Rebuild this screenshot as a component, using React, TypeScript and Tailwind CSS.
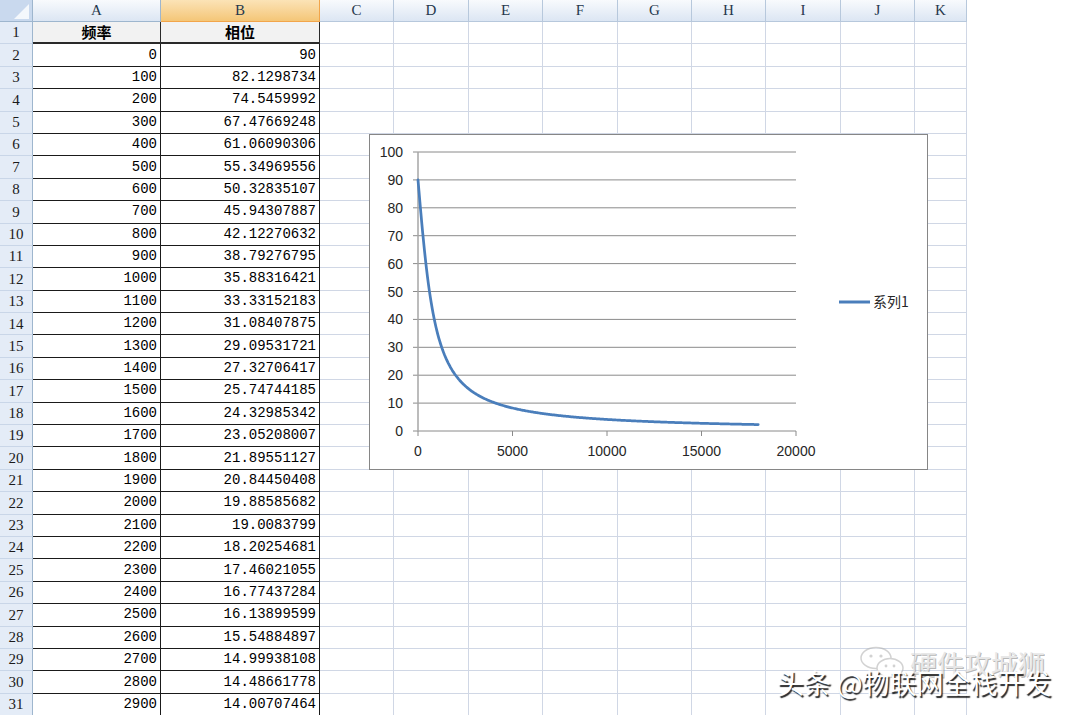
const COLS = [
  { key: "C", w: "w-[74px]" },
  { key: "D", w: "w-[75px]" },
  { key: "E", w: "w-[74px]" },
  { key: "F", w: "w-[75px]" },
  { key: "G", w: "w-[74px]" },
  { key: "H", w: "w-[74px]" },
  { key: "I", w: "w-[75px]" },
  { key: "J", w: "w-[74px]" },
  { key: "K", w: "w-[52px]" },
];

const PHASE = [
  "90", "82.1298734", "74.5459992", "67.47669248", "61.06090306", "55.34969556",
  "50.32835107", "45.94307887", "42.12270632", "38.79276795", "35.88316421",
  "33.33152183", "31.08407875", "29.09531721", "27.32706417", "25.74744185",
  "24.32985342", "23.05208007", "21.89551127", "20.84450408", "19.88585682",
  "19.0083799", "18.20254681", "17.46021055", "16.77437284", "16.13899599",
  "15.54884897", "14.99938108", "14.48661778", "14.00707464",
];

const serif = "font-['Liberation_Serif',serif]";
const mono = "font-['Liberation_Mono',monospace]";

function HeaderRow() {
  return (
    <div className="flex h-[22px]">
      {/* corner */}
      <div className="w-[33px] h-full bg-[#c9d9ee] border-r border-b border-[#9eb6ce] relative">
        <svg width="33" height="22" className="absolute inset-0">
          <polygon points="29,4 29,19 14,19" fill="#f4f8fc" />
        </svg>
      </div>
      <div className={`w-[128px] h-full flex items-center justify-center bg-linear-to-b from-[#f8fafd] to-[#dce6f3] border-r border-b border-[#9eb6ce] text-[15px] text-[#27384d] ${serif}`}>
        A
      </div>
      <div className={`w-[159px] h-full flex items-center justify-center bg-linear-to-b from-[#fbe3b6] to-[#f4c677] border-r border-b border-[#f2a54a] text-[15px] text-[#27384d] ${serif}`}>
        B
      </div>
      {COLS.map((c) => (
        <div
          key={c.key}
          className={`${c.w} h-full flex items-center justify-center bg-linear-to-b from-[#f8fafd] to-[#dce6f3] border-r border-b border-[#b7c8dc] text-[15px] text-[#27384d] ${serif}`}
        >
          {c.key}
        </div>
      ))}
    </div>
  );
}

function Row({ n }: { n: number }) {
  const isHead = n === 1;
  const freq = String((n - 2) * 100);
  return (
    <div className="flex h-[22.4px]">
      <div className={`w-[33px] h-full flex items-center justify-center bg-[#e4ecf7] border-r border-r-[#9eb6ce] border-b border-b-[#c9d6e8] text-[15px] text-[#1a1a1a] ${serif}`}>
        {n}
      </div>
      {isHead ? (
        <>
          <div className="w-[128px] h-full flex items-center justify-center bg-[#f2f2f2] border-r border-b-2 border-[#2a2a2a] text-[15px] font-bold text-black font-['Noto_Sans_CJK_SC',sans-serif]">
            频率
          </div>
          <div className="w-[159px] h-full flex items-center justify-center bg-[#f2f2f2] border-r border-b-2 border-[#2a2a2a] text-[15px] font-bold text-black font-['Noto_Sans_CJK_SC',sans-serif]">
            相位
          </div>
        </>
      ) : (
        <>
          <div className={`w-[128px] h-full flex items-center justify-end pr-[3px] border-r border-b border-[#1a1a1a] text-[14px] text-black ${mono}`}>
            {freq}
          </div>
          <div className={`w-[159px] h-full flex items-center justify-end pr-[3px] border-r border-b border-[#1a1a1a] text-[14px] text-black ${mono}`}>
            {PHASE[n - 2]}
          </div>
        </>
      )}
      {COLS.map((c) => (
        <div key={c.key} className={`${c.w} h-full border-r border-b border-[#d0d7e5]`} />
      ))}
    </div>
  );
}

function Chart() {
  // plot geometry, relative to the chart box
  const x0 = 48;
  const x1 = 426;
  const yTop = 17;
  const yBot = 296;
  const sx = (f: number) => x0 + ((x1 - x0) * f) / 20000;
  const sy = (v: number) => yBot - ((yBot - yTop) * v) / 100;

  const pts: string[] = [];
  for (let f = 0; f <= 18000; f += 50) {
    const v = f === 0 ? 90 : (Math.atan(723.4 / f) * 180) / Math.PI;
    pts.push(`${sx(f).toFixed(2)},${sy(v).toFixed(2)}`);
  }

  const yTicks = [0, 10, 20, 30, 40, 50, 60, 70, 80, 90, 100];
  const xTicks = [0, 5000, 10000, 15000, 20000];

  return (
    <div className="absolute left-[369px] top-[134px] w-[559px] h-[336px] bg-white border border-[#868686]">
      <svg width="557" height="334" className="block font-['Liberation_Sans',sans-serif]">
        {yTicks.map((t) => (
          <g key={t}>
            <line x1={43} x2={x1} y1={sy(t)} y2={sy(t)} stroke="#8a8a8a" strokeWidth="1" />
            <text
              x={33}
              y={sy(t)}
              textAnchor="end"
              dominantBaseline="central"
              fontSize="14"
              fill="#262626"
            >
              {t}
            </text>
          </g>
        ))}
        <line x1={x0} x2={x0} y1={yTop} y2={yBot} stroke="#a6a6a6" strokeWidth="1.5" />
        {xTicks.map((t) => (
          <g key={t}>
            <line x1={sx(t)} x2={sx(t)} y1={yBot} y2={yBot + 5} stroke="#8a8a8a" strokeWidth="1" />
            <text
              x={sx(t)}
              y={316}
              textAnchor="middle"
              dominantBaseline="central"
              fontSize="14"
              fill="#262626"
            >
              {t}
            </text>
          </g>
        ))}
        <polyline
          points={pts.join(" ")}
          fill="none"
          stroke="#4a7ebb"
          strokeWidth="2.75"
          strokeLinejoin="round"
          strokeLinecap="round"
        />
        {/* legend */}
        <line x1={469} x2={500} y1={167} y2={167} stroke="#4a7ebb" strokeWidth="3" />
        <text
          x={503}
          y={166}
          dominantBaseline="central"
          fontSize="14"
          fill="#262626"
          className="font-['Noto_Sans_CJK_SC',sans-serif]"
        >
          系列1
        </text>
      </svg>
    </div>
  );
}

function Watermark() {
  return (
    <>
      <div className="absolute left-[859px] top-[646px] flex items-center gap-[5px] opacity-60">
        <svg width="46" height="34" viewBox="0 0 46 34">
          <ellipse cx="17" cy="12" rx="15" ry="10.5" fill="#ffffff" stroke="#b5b5b5" strokeWidth="1.5" />
          <circle cx="12" cy="10" r="1.6" fill="#b5b5b5" />
          <circle cx="22" cy="10" r="1.6" fill="#b5b5b5" />
          <ellipse cx="31" cy="22" rx="13" ry="9.5" fill="#ffffff" stroke="#b5b5b5" strokeWidth="1.5" />
          <circle cx="27" cy="20" r="1.4" fill="#b5b5b5" />
          <circle cx="35" cy="20" r="1.4" fill="#b5b5b5" />
        </svg>
        <span className="text-[27px] leading-none text-[#d8d8d8] font-['Noto_Sans_CJK_SC',sans-serif] [text-shadow:1px_1px_0_#8a8a8a]">
          硬件攻城狮
        </span>
      </div>
      <div className="absolute left-[777px] top-[666px] text-[27px] leading-[34px] text-white font-['Noto_Sans_CJK_SC',sans-serif] [text-shadow:1.5px_1.5px_1px_rgba(0,0,0,0.85)] whitespace-nowrap">
        头条 @物联网全栈开发
      </div>
    </>
  );
}

export default function App() {
  const rows = Array.from({ length: 31 }, (_, i) => i + 1);
  return (
    <div className="relative w-[1080px] h-[715px] overflow-hidden bg-white">
      <div className="w-[967px]">
        <HeaderRow />
        {rows.map((n) => (
          <Row key={n} n={n} />
        ))}
      </div>
      <Chart />
      <Watermark />
    </div>
  );
}
